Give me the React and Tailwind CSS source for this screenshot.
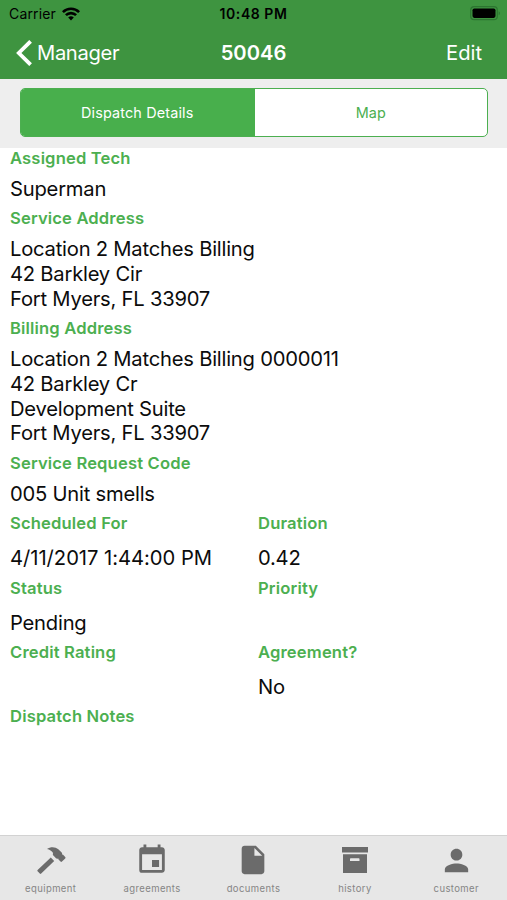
import { MdEvent, MdInsertDriveFile, MdPerson } from 'react-icons/md'

const tabs = [
  { label: 'equipment', icon: HammerIcon },
  { label: 'agreements', icon: CalendarIcon },
  { label: 'documents', icon: DocumentIcon },
  { label: 'history', icon: ArchiveIcon },
  { label: 'customer', icon: PersonIcon }
]

const dispatch = {
  tech: ['Superman'],
  serviceAddress: ['Location 2 Matches Billing', '42 Barkley Cir', 'Fort Myers, FL 33907'],
  billingAddress: [
    'Location 2 Matches Billing 0000011',
    '42 Barkley Cr',
    'Development Suite',
    'Fort Myers, FL 33907'
  ],
  requestCode: ['005 Unit smells']
}

function HammerIcon() {
  return (
    <svg width="30" height="30" viewBox="0 0 30 30" fill="#6b6b6b">
      <path d="M14.8 12.6l3.4 3.4L5.2 28.6a1 1 0 0 1-1.4 0l-2.2-2.3a1 1 0 0 1 0-1.4z" />
      <path d="M11 4c3.300-2.500 8.300-2.500 11.300.2l3.400 3.300c.5.600.5 1.200.4 2l1 .3 2.100 2.100c.5.500.5 1 0 1.500l-3.200 3.200c-.5.500-1 .5-1.500 0l-2-2-.3-1.200c-.8.4-1.600.4-2.200-.2l-2.600-2.600c-.6-.7-.7-1.600-.3-2.700-1.500-2-3.300-3.200-6.100-3.900z" />
    </svg>
  )
}

function CalendarIcon() {
  return <MdEvent size={34} color="#6b6b6b" />
}

function DocumentIcon() {
  return <MdInsertDriveFile size={34} color="#6b6b6b" />
}

function ArchiveIcon() {
  return (
    <svg width="26" height="26" viewBox="0 0 26 26" fill="#6b6b6b">
      <path d="M0 0h26v5.5H0z" />
      <path fillRule="evenodd" d="M1 7.3h24V26H1zM8.7 11.200a.7.7 0 0 0-.7.7v2h9.500v-2a.7.7 0 0 0-.7-.7z" />
    </svg>
  )
}

function PersonIcon() {
  return <MdPerson size={35} color="#6b6b6b" />
}

function WifiIcon() {
  return (
    <svg width="18" height="14" viewBox="0 0 18 14" fill="none" stroke="#000" strokeWidth="2.6">
      <path d="M.9 5.100a11.500 11.500 0 0 1 16.200 0" />
      <path d="M3.900 8.200a7.200 7.200 0 0 1 10.200 0" />
      <path d="M9 13.500l-2.800-2.900a4 4 0 0 1 5.600 0z" fill="#000" stroke="none" />
    </svg>
  )
}

function BatteryIcon() {
  return (
    <svg width="31" height="15" viewBox="0 0 31 15">
      <rect x=".7" y=".7" width="26.6" height="13" rx="3.5" fill="none" stroke="#2c7530" strokeWidth="1.2" />
      <rect x="2.5" y="2.5" width="23" height="9.4" rx="1.8" fill="#000" />
      <path d="M28.700 5.200c1.600.7 1.600 3.300 0 4z" fill="#2c7530" />
    </svg>
  )
}

function Field({ label, lines = [], tall = false, tracking = 'tracking-[-0.22px]' }) {
  return (
    <div className={tall ? 'h-[64.4px]' : 'pb-[6.6px]'}>
      <div className="h-5 text-[16.6px] font-semibold leading-5 tracking-[0.15px] text-[#4caf50]">{label}</div>
      <div className={tall ? 'pt-[13.2px]' : 'pt-[8.9px]'}>
        {lines.map((line) => (
          <div key={line} className={`h-[24.8px] text-[20.2px] leading-[24.8px] ${tracking}`}>
            {line}
          </div>
        ))}
      </div>
    </div>
  )
}

export default function App() {
  return (
    <div className="flex h-[900px] w-[507px] flex-col overflow-hidden bg-white font-['Inter',sans-serif] whitespace-nowrap text-[#0c0c0c]">
      {/* Status bar */}
      <header className="h-[79px] bg-[#3e9440] text-white">
        <div className="grid h-[27px] grid-cols-3 items-center text-[14px] text-black">
          <div className="flex items-center gap-1.5 pl-[9px]">
            <span className="tracking-[0.15px]">Carrier</span>
            <WifiIcon />
          </div>
          <span className="text-center font-semibold tracking-[0.55px]">10:48 PM</span>
          <div className="flex justify-end pr-[6px]">
            <BatteryIcon />
          </div>
        </div>
        {/* Navigation */}
        <div className="grid h-[52px] grid-cols-3 items-center text-[20.2px]">
          <div className="flex items-center gap-[5px] pl-4">
            <svg width="16" height="26" viewBox="0 0 16 26" fill="none" stroke="#fff" strokeWidth="3.8">
              <path d="M14.6 1.3L2.8 13l11.8 11.7" />
            </svg>
            <span className="tracking-[-0.35px]">Manager</span>
          </div>
          <h1 className="text-center font-semibold">50046</h1>
          <span className="pr-[25px] text-right">Edit</span>
        </div>
      </header>

      {/* Segmented control */}
      <div className="h-[69px] bg-[#eeeeee] pt-[9px] pr-[19px] pl-5">
        <div className="flex h-[49px] overflow-hidden rounded-[5px] border border-[#4caf50] bg-white text-[14.4px]">
          <div className="flex flex-1 items-center justify-center bg-[#48af4c] pr-px tracking-[0.15px] text-white">
            Dispatch Details
          </div>
          <div className="flex flex-1 items-center justify-center text-[#4caf50]">Map</div>
        </div>
      </div>

      <main className="flex-1 pl-[10px]">
        <Field label="Assigned Tech" lines={dispatch.tech} />
        <Field label="Service Address" lines={dispatch.serviceAddress} />
        <Field label="Billing Address" lines={dispatch.billingAddress} />
        <Field label="Service Request Code" lines={dispatch.requestCode} />
        <div className="grid grid-cols-[248px_1fr]">
          <Field tall label="Scheduled For" lines={['4/11/2017 1:44:00 PM']} tracking="tracking-[-0.03px]" />
          <Field tall label="Duration" lines={['0.42']} />
          <Field tall label="Status" lines={['Pending']} />
          <Field tall label="Priority" />
          <Field tall label="Credit Rating" />
          <Field tall label="Agreement?" lines={['No']} />
        </div>
        <Field label="Dispatch Notes" />
      </main>

      {/* Bottom tabs */}
      <nav className="grid h-[65px] grid-cols-5 border-t border-[#d2d2d2] bg-[#e7e7e7]">
        {tabs.map(({ label, icon: Icon }) => (
          <div key={label} className="flex flex-col items-center pt-[7px]">
            <div className="flex h-[34px] items-center">
              <Icon />
            </div>
            <span className="mt-[5px] text-[9.5px] leading-[14px] tracking-[0.4px] text-[#858585]">{label}</span>
          </div>
        ))}
      </nav>
    </div>
  )
}
